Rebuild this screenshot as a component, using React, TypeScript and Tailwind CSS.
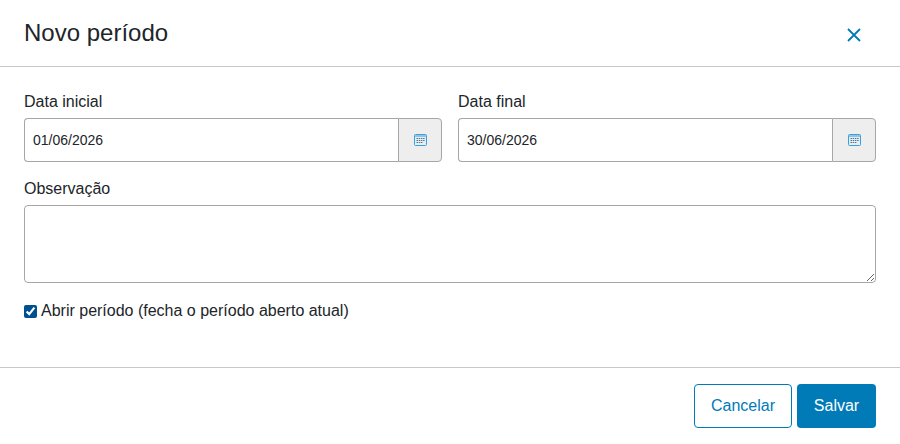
export default function App() {
  const Cal = () => (
    <svg width="13" height="12" viewBox="0 0 13 12" fill="none" className="-mt-[1px]">
      <rect x="0.5" y="0.5" width="12" height="11" rx="1" fill="#e3eff7" stroke="#3b9fd8" />
      <rect x="1" y="1" width="11" height="2" fill="#8fc4e6" />
      <g fill="#5f7182">
        <rect x="2.5" y="4" width="1.5" height="1" /><rect x="4.7" y="4" width="1.5" height="1" /><rect x="6.9" y="4" width="1.5" height="1" /><rect x="9.1" y="4" width="1.5" height="1" />
        <rect x="2.5" y="6" width="1.5" height="1" /><rect x="4.7" y="6" width="1.5" height="1" /><rect x="6.9" y="6" width="1.5" height="1" /><rect x="9.1" y="6" width="1.5" height="1" />
        <rect x="2.5" y="8" width="1.5" height="1" /><rect x="4.7" y="8" width="1.5" height="1" /><rect x="6.9" y="8" width="1.5" height="1" />
      </g>
    </svg>
  );
  const DateField = ({ label, value }: { label: string; value: string }) => (
    <div className="flex-1">
      <label className="block h-[24px] leading-[24px] mb-[4px] text-[16px] text-[#212529]">{label}</label>
      <div className="flex h-[44px]">
        <input
          readOnly
          value={value}
          className="flex-1 min-w-0 h-full px-[8px] text-[14px] text-[#212529] bg-white border border-[#a6a6a6] border-r-0 rounded-l-[4px] outline-none"
        />
        <button className="w-[44px] h-full flex items-center justify-center bg-[#eeeeee] border border-[#a6a6a6] rounded-r-[4px]">
          <Cal />
        </button>
      </div>
    </div>
  );
  return (
    <div className="w-[900px] h-[444px] bg-white flex flex-col font-['Liberation_Sans',Arial,sans-serif] text-[#212529] overflow-hidden">
      <header className="h-[67px] shrink-0 flex items-center justify-between pl-[24px] pr-[38px] border-b border-[#c8c8c8]">
        <h1 className="text-[24px] leading-[32px] text-[#212529] -mt-[1px]">Novo período</h1>
        <button aria-label="Fechar" className="w-[16px] h-[16px] flex items-center justify-center mt-[3px]">
          <svg width="14" height="14" viewBox="0 0 14 14" fill="none" stroke="#007bb8" strokeWidth="1.8">
            <path d="M1 1 L13 13 M13 1 L1 13" />
          </svg>
        </button>
      </header>
      <main className="flex-1 flex flex-col px-[24px] pt-[23px]">
        <div className="flex gap-[16px]">
          <DateField label="Data inicial" value="01/06/2026" />
          <DateField label="Data final" value="30/06/2026" />
        </div>
        <label className="block h-[24px] leading-[24px] mt-[15px] mb-[4px] text-[16px] text-[#212529]">Observação</label>
        <textarea className="block w-full h-[78px] border border-[#a6a6a6] rounded-[4px] bg-white outline-none px-[8px] py-[6px] text-[14px]" />
        <label className="flex items-center mt-[16px] h-[24px] text-[16px] text-[#212529]">
          <input type="checkbox" defaultChecked className="w-[13px] h-[13px] m-0 mr-[4px] accent-[#00508f]" />
          Abrir período (fecha o período aberto atual)
        </label>
      </main>
      <footer className="h-[77px] shrink-0 flex justify-end items-start gap-[5px] pt-[16px] pr-[24px] border-t border-[#c8c8c8]">
        <button className="w-[98px] h-[44px] text-[16px] text-[#007bb8] bg-white border border-[#007bb8] rounded-[4px]">Cancelar</button>
        <button className="w-[79px] h-[44px] text-[16px] text-white bg-[#007bb8] rounded-[4px]">Salvar</button>
      </footer>
    </div>
  );
}
